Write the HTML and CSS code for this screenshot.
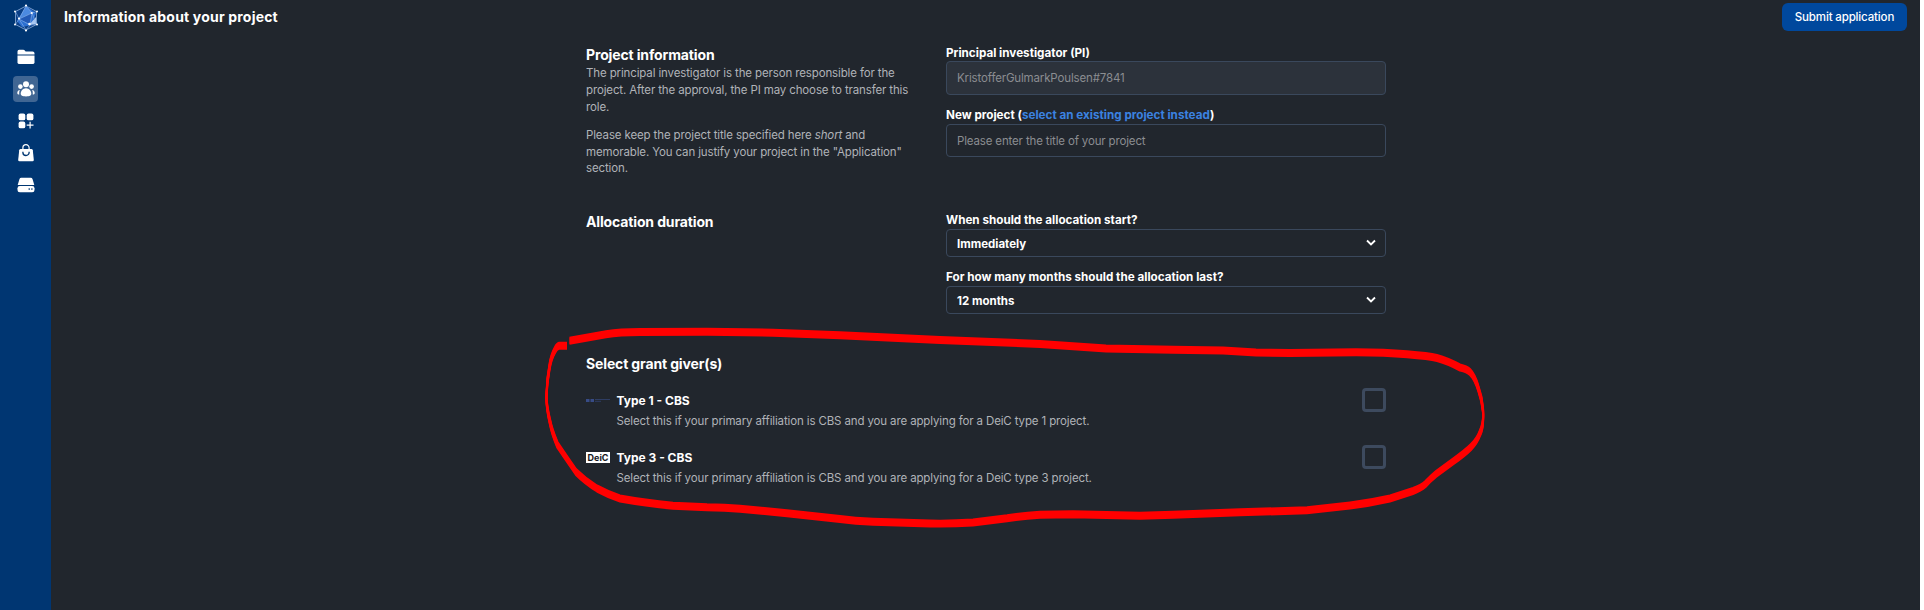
FILE: index.html
```html
<!DOCTYPE html>
<html lang="en">
<head>
<meta charset="utf-8">
<title>Information about your project</title>
<link rel="stylesheet" href="styles.css">
</head>
<body>
<div class="app">
  <nav class="sidebar">
    <svg class="logo" width="26" height="28" viewBox="0 0 26 28">
      <path d="M13 2 23.500 7.500V20.500L13 26 2.500 20.500V7.500z" fill="#0a3f86" stroke="#8fb0dc" stroke-width=".8"/>
      <path d="M13 2 4 17 9 23 19 21 23 9z" fill="#2c6fd0"/>
      <path d="M13 2 6 15 19 9z" fill="#4c8ae0"/><path d="M6 15 19 9 17 20z" fill="#2259b5"/><path d="M16 21l7-8v7z" fill="#a9c8f2"/>
      <path d="M13 2 6 15 19 9zM6 15l11 6 2-12M2.500 7.500 6 15 2.500 20.500M23.500 7.500 19 9l4.500 11.500M6 15l7 11 4-5 6.500-.5" fill="none" stroke="#8fb5ea" stroke-width=".6"/>
      <g fill="#fff"><circle cx="13" cy="1.500" r="1.100"/><circle cx="2" cy="7.500" r="1"/><circle cx="24" cy="7.500" r="1"/><circle cx="2" cy="20.500" r="1"/><circle cx="24" cy="20.500" r="1"/><circle cx="13" cy="26.500" r="1.100"/><circle cx="6" cy="14.500" r="1.100"/><circle cx="18.700" cy="9" r="1.100"/><circle cx="16.500" cy="20" r="1.300"/></g>
    </svg>
    <a class="nav"><svg width="18" height="16" viewBox="0 0 18 16" fill="#fff"><path d="M.5 5.500V2.500Q.5.800 2.200.8h4q1 0 1.600.7l.8.900h7q1.900 0 1.900 1.900v1.200z"/><path d="M.5 6.500h17v6.700q0 1.900-1.900 1.900H2.400Q.5 15.100.5 13.200z"/></svg></a>
    <a class="nav active"><svg width="18" height="16" viewBox="0 0 18 16" fill="#fff"><circle cx="9" cy="3.300" r="3"/><circle cx="3.400" cy="5.600" r="2.300"/><circle cx="14.600" cy="5.600" r="2.300"/><path d="M9 7.300c3.200 0 5.300 2.900 5.300 5.300 0 2.100-1.500 2.800-5.300 2.800s-5.300-.7-5.300-2.800c0-2.400 2.100-5.300 5.300-5.300z"/><path d="M2.300 9C1 9.300.3 10.800.3 12c0 1 .8 1.500 2 1.600C2.100 12 2.200 10.300 2.800 9zM15.700 9c1.300.3 2 1.800 2 3 0 1-.8 1.500-2 1.600.2-1.600.1-3.300-.5-4.600z"/></svg></a>
    <a class="nav"><svg width="16" height="16" viewBox="0 0 16 16" fill="#fff"><rect x=".6" y=".6" width="6.700" height="6.700" rx="1.900"/><rect x="8.700" y=".6" width="6.700" height="6.700" rx="1.900"/><rect x=".6" y="8.600" width="6.700" height="6.700" rx="1.900"/><path d="M11.500 8.700h1.200v2.800h2.800v1.200h-2.800v2.800h-1.200v-2.800H8.700v-1.200h2.800z"/></svg></a>
    <a class="nav"><svg width="16" height="18" viewBox="0 0 16 18"><path d="M2.700 5h10.600q1.300 0 1.500 1.300l1 9.400q.1 1.500-1.300 1.500h-13Q.1 17.200.2 15.700l1-9.400Q1.400 5 2.700 5z" fill="#fff"/><path d="M4.900 5V3.800a3.100 3.100 0 0 1 6.200 0V5" fill="none" stroke="#fff" stroke-width="1.200"/><path d="M4.900 7.800v.6a3.100 3.100 0 0 0 6.200 0v-.6" fill="none" stroke="#003672" stroke-width="1.300"/></svg></a>
    <a class="nav"><svg width="18" height="16" viewBox="0 0 18 16" fill="#fff"><path d="M4.300.7h9.400q1.400 0 1.800 1.400L17.300 8H.7l1.800-5.900Q2.900.7 4.300.7z"/><rect x=".5" y="9" width="17" height="6.300" rx="2.300"/><g fill="#003672"><circle cx="12.200" cy="12.100" r=".8"/><circle cx="14.900" cy="12.100" r=".8"/></g></svg></a>
  </nav>

  <main class="main">
    <header class="topbar">
      <h1 class="page-title">Information about your project</h1>
      <button class="submit">Submit application</button>
    </header>

    <div class="form">
      <section class="row info">
        <div>
          <h2 class="heading">Project information</h2>
          <p class="help">The principal investigator is the person responsible for the<br>project. After the approval, the PI may choose to transfer this<br>role.</p>
          <p class="help">Please keep the project title specified here <em>short</em> and<br>memorable. You can justify your project in the "Application"<br>section.</p>
        </div>
        <div>
          <div class="label">Principal investigator (PI)</div>
          <div class="field disabled">KristofferGulmarkPoulsen#7841</div>
          <div class="label second">New project (<a class="link">select an existing project instead</a>)</div>
          <div class="field title-field">Please enter the title of your project</div>
        </div>
      </section>

      <section class="row duration">
        <h2 class="heading">Allocation duration</h2>
        <div>
          <div class="label">When should the allocation start?</div>
          <div class="select"><span>Immediately</span><svg width="10" height="8" viewBox="0 0 10 8"><path d="M1 1.500 5 5.500 9 1.500" fill="none" stroke="#fff" stroke-width="1.800"/></svg></div>
          <div class="label third">For how many months should the allocation last?</div>
          <div class="select"><span>12 months</span><svg width="10" height="8" viewBox="0 0 10 8"><path d="M1 1.500 5 5.500 9 1.500" fill="none" stroke="#fff" stroke-width="1.800"/></svg></div>
        </div>
      </section>

      <section class="grants">
        <h2 class="heading">Select grant giver(s)</h2>
        <div class="grant">
          <svg class="mark" width="24" height="24" viewBox="0 0 24 24"><path d="M0 11h3.500v3H0zM4.500 11H8v3H4.500z" fill="#374b86"/><path d="M9 11.500h15M9 13.300h6" stroke="#30406a" stroke-width=".9"/></svg>
          <div class="name">Type 1 - CBS</div>
          <span class="check"></span>
          <p class="desc">Select this if your primary affiliation is CBS and you are applying for a DeiC type 1 project.</p>
        </div>
        <div class="grant">
          <div class="deic">DeiC</div>
          <div class="name">Type 3 - CBS</div>
          <span class="check"></span>
          <p class="desc">Select this if your primary affiliation is CBS and you are applying for a DeiC type 3 project.</p>
        </div>
      </section>
    </div>
  </main>
</div>

<svg class="marker" width="1924" height="610" viewBox="0 0 1924 610">
  <defs>
    <path id="loop" d="M569.500 340.700 606 334.300Q620 332 640 332L707 331.700 773 332.700 840 335.300 940 340 1040 344 1106 348.500 1173 349.700 1223 350.500 1256 352.500 1290 353 1356 352.300Q1385 352.500 1407 354.300T1437 358Q1448 361 1460 367.500 1467 369 1470 372 1475 377 1478.500 389 1482 399 1483 410 1484 425 1480 433 1477 441 1471 447 1465 453 1453 461.500L1436 474Q1430 479 1425.500 484 1421 488 1413 491L1390 498.500Q1370 503 1350 505.500L1307 510.300 1240 512.300 1173 514.700 1140 515.700 1073 514.300 1040 514.700Q1022 516 1007 518.300L973 522.500Q950 524 930 523.500L873 521.700Q855 521 840 519L787 513.300 740 508.700Q725 507.500 707 507.300L673 505.700Q645 503 620 498.500 607 494 597 488.500 585 481 576 472 567 459 557.500 445 552 432 550 422 546 405 546.500 395 547 380 549.500 367 551 357 555 350 557 346 559 345.700H567"/>
  </defs>
  <g fill="none" stroke="#f00" stroke-width="2">
    <use href="#loop" y="-3"/><use href="#loop" y="-2"/><use href="#loop" y="-1"/><use href="#loop"/><use href="#loop" y="1"/><use href="#loop" y="2"/><use href="#loop" y="3"/>
  </g>
</svg>
</body>
</html>
```
FILE: styles.css
```css
* { box-sizing: border-box; }
body { margin: 0; background: #fff; font-family: Inter, "Open Sans", sans-serif; font-size: 11.500px; color: #fff; }
.app { display: flex; width: 1920px; height: 610px; background: #21262d; }
.sidebar { width: 51px; background: #003672; display: flex; flex-direction: column; align-items: center; padding-top: 4px; }
.logo { display: block; margin-bottom: 12px; }
.nav { width: 25px; height: 26px; margin-bottom: 6px; border-radius: 4px; display: flex; align-items: center; justify-content: center; flex: none; }
.active { background: #406693; }
.main { flex: 1; }
.topbar { height: 34px; display: flex; justify-content: space-between; align-items: center; padding: 0 13px; }
.page-title { margin: 0; padding-bottom: 2px; font-size: 14px; font-weight: 700; line-height: 17px; letter-spacing: .19px; white-space: nowrap; }
.submit { width: 125px; height: 28px; border: 0; border-radius: 6px; background: #00489d; color: #fff; font: 500 11.500px Inter, sans-serif; letter-spacing: -.15px; padding: 0; white-space: nowrap; }
.form { margin-left: 535px; width: 800px; padding-top: 11px; }
.row { display: grid; grid-template-columns: 330px 440px; column-gap: 30px; white-space: nowrap; }
.info { height: 167px; }
.duration { height: 141px; }
.heading { margin: 1px 0 2px; font-size: 14px; line-height: 17px; font-weight: 700; letter-spacing: -.14px; }
.help { margin: 0 0 11.500px; line-height: 16.800px; letter-spacing: -.13px; color: #b0b3b8; }
.label { font-size: 11.700px; line-height: 16px; font-weight: 700; }
.second { margin-top: 12px; }
.duration .label { line-height: 17px; }
.third { margin-top: 12px; }
.link { color: #3b82e0; }
.field { height: 34px; border: 1px solid #3a485c; border-radius: 4px; padding: 0 10px; line-height: 32px; letter-spacing: -.15px; color: #8b8d91; }
.title-field { margin-top: 1px; height: 33px; }
.disabled { background: #2c323b; }
.select { height: 28px; border: 1px solid #3a485c; border-radius: 4px; padding: 1px 9px 0 10px; display: flex; align-items: center; justify-content: space-between; font-weight: 700; }
.select svg { margin-bottom: 1px; }
.grants .heading { margin: 0 0 16px; padding-top: 2px; }
.grant { height: 57px; display: grid; grid-template-columns: 24px 1fr 24px; grid-template-rows: 24px 19px; column-gap: 6.500px; align-items: center; }
.name { font-weight: 700; font-size: 12px; }
.desc { grid-column: 2; margin: 0; color: #b0b3b8; line-height: 17px; letter-spacing: -.13px; white-space: nowrap; }
.check { width: 24px; height: 24px; border: 3px solid #3d4a5e; border-radius: 4px; }
.deic { width: 24px; height: 11px; background: #fff; color: #15171c; font-size: 9px; font-weight: 700; line-height: 11px; text-align: center; }
.marker { position: absolute; left: 0; top: 0; pointer-events: none; }
```
